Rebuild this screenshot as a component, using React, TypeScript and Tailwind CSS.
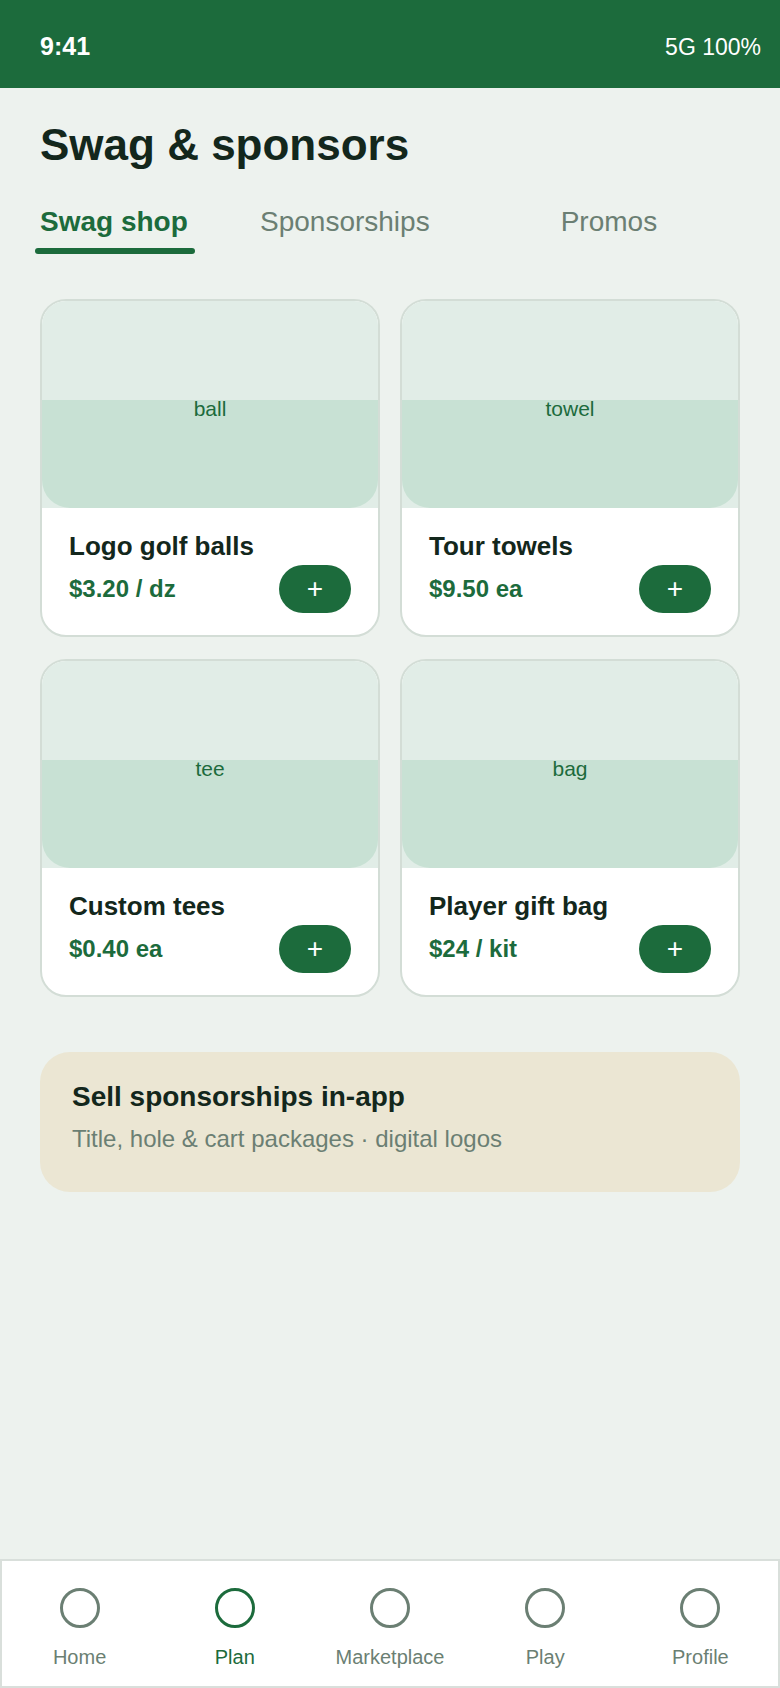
import React from 'react';

type Item = { name: string; price: string; label: string };

const items: Item[] = [
    { name: 'Logo golf balls', price: '$3.20 / dz', label: 'ball' },
    { name: 'Tour towels', price: '$9.50 ea', label: 'towel' },
    { name: 'Custom tees', price: '$0.40 ea', label: 'tee' },
    { name: 'Player gift bag', price: '$24 / kit', label: 'bag' },
];

const navItems = ['Home', 'Plan', 'Marketplace', 'Play', 'Profile'];

const ProductCard: React.FC<{ item: Item }> = ({ item }) => (
    <div className="rounded-[26px] border-2 border-[#d3ddd6] bg-white overflow-hidden flex flex-col">
        {/* image placeholder */}
        <div className="h-[207px] bg-[#e1ede7] flex flex-col">
            <div className="h-[99px]" />
            <div className="flex-1 bg-[#c8e1d4] rounded-b-[28px]">
                <div className="-mt-[2px] text-center text-[21px] leading-[21px] text-[#1c6b3c]">{item.label}</div>
            </div>
        </div>
        <div className="px-[27px] pt-[23px] pb-[22px]">
            <div className="text-[26px] leading-[31px] font-bold text-[#13271c]">{item.name}</div>
            <div className="mt-[3px] flex items-center justify-between">
                <span className="text-[24px] font-bold text-[#1c6b3c]">{item.price}</span>
                <button className="w-[72px] h-[48px] rounded-full bg-[#1c6b3c] text-white text-[28px] leading-none flex items-center justify-center">+</button>
            </div>
        </div>
    </div>
);

export default function App() {
    return (
        <div className="min-h-screen flex flex-col bg-[#edf2ee] font-['Liberation_Sans',Arial,sans-serif]">
            {/* status bar */}
            <div className="h-[88px] bg-[#1c6b3c] flex items-center justify-between pl-[40px] pr-[19px] pt-[6px] text-white">
                <span className="text-[25px] font-bold">9:41</span>
                <span className="text-[23px]">5G 100%</span>
            </div>

            <div className="px-[40px] pt-[30px]">
                <h1 className="text-[44px] leading-[53px] font-bold text-[#13271c]">Swag &amp; sponsors</h1>

                {/* tabs */}
                <div className="mt-[34px] -ml-[5px] flex items-start">
                    <div className="flex flex-col w-[160px]">
                        <span className="px-[5px] text-[28px] leading-[34px] font-bold text-[#1c6b3c]">Swag shop</span>
                        <div className="mt-[9px] h-[6px] rounded-full bg-[#1c6b3c]" />
                    </div>
                    <span className="ml-[60px] px-[5px] text-[28px] leading-[34px] text-[#6b7f73]">Sponsorships</span>
                    <span className="ml-[121px] px-[5px] text-[28px] leading-[34px] text-[#6b7f73]">Promos</span>
                </div>

                {/* product grid */}
                <div className="mt-[45px] grid grid-cols-2 gap-x-5 gap-y-[22px]">
                    {items.map((it) => (
                        <ProductCard key={it.name} item={it} />
                    ))}
                </div>

                {/* sponsorship banner */}
                <div className="mt-[55px] rounded-[30px] bg-[#ebe6d3] pl-[32px] pr-[32px] pt-[28px] pb-[39px]">
                    <div className="text-[28px] leading-[34px] font-bold text-[#13271c]">Sell sponsorships in-app</div>
                    <div className="mt-[10px] text-[24px] leading-[29px] text-[#6b7f73]">Title, hole &amp; cart packages · digital logos</div>
                </div>
            </div>

            {/* bottom nav */}
            <div className="mt-auto h-[129px] border-2 border-[#d9dfdb] bg-white grid grid-cols-5">
                {navItems.map((n) => {
                    const active = n === 'Plan';
                    return (
                        <div key={n} className="flex flex-col items-center pt-[27px]">
                            <div className={`w-[40px] h-[40px] rounded-full border-[3.5px] ${active ? 'border-[#1c6b3c]' : 'border-[#6b7f73]'}`} />
                            <span className={`mt-[17px] text-[20px] leading-[24px] ${active ? 'text-[#1c6b3c]' : 'text-[#6b7f73]'}`}>{n}</span>
                        </div>
                    );
                })}
            </div>
        </div>
    );
}
